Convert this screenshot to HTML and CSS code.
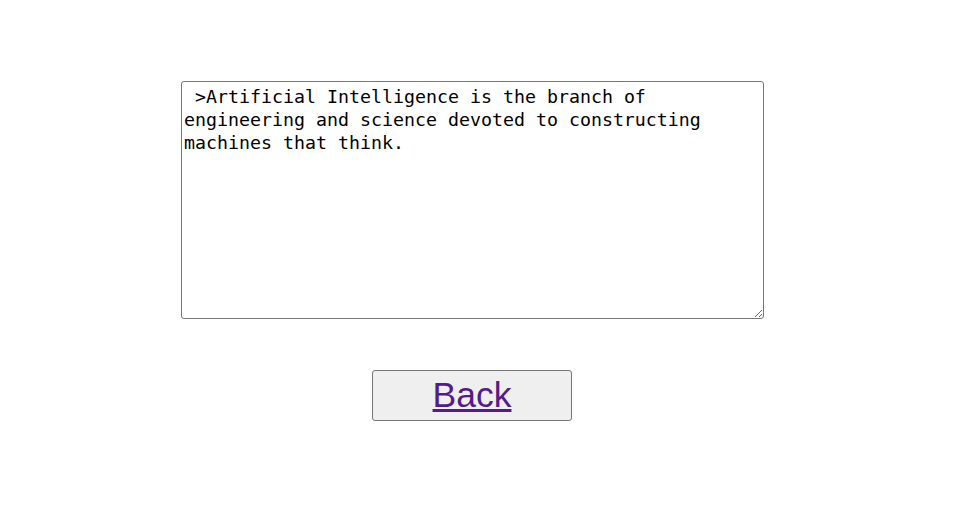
FILE: index.html
```html
<!DOCTYPE html>
<html>
<head>
<meta charset="utf-8">
<link rel="stylesheet" href="styles.css">
</head>
<body>
<main class="page">
<textarea class="note" spellcheck="false"> >Artificial Intelligence is the branch of engineering and science devoted to constructing machines that think.</textarea>
<div class="back-btn"><a href="#" class="back-link">Back</a></div>
</main>
</body>
</html>
```

FILE: styles.css
```css
html, body {
  margin: 0;
  padding: 0;
  background: #ffffff;
}
.page {
  display: flex;
  flex-direction: column;
  align-items: flex-start;
  padding-top: 81px;
  padding-left: 181px;
}
.note {
  box-sizing: border-box;
  width: 583px;
  height: 238px;
  margin: 0;
  padding: 3px 2px 1px 2px;
  border: 1px solid #767676;
  border-radius: 3px;
  font-family: "DejaVu Sans Mono", "Liberation Mono", monospace;
  font-size: 18.27px;
  line-height: 23px;
  color: #000;
  background: #fff;
  resize: both;
  overflow: hidden;
  outline: none;
}
.back-btn {
  box-sizing: border-box;
  margin-top: 51px;
  margin-left: 191px;
  width: 200px;
  height: 51px;
  background: #efefef;
  border: 1px solid #767676;
  border-radius: 3px;
  display: flex;
  align-items: center;
  justify-content: center;
}
.back-link {
  font-family: "Liberation Sans", Arial, sans-serif;
  font-size: 35.5px;
  color: #551a8b;
  text-decoration: underline;
  line-height: 1;
}
```
